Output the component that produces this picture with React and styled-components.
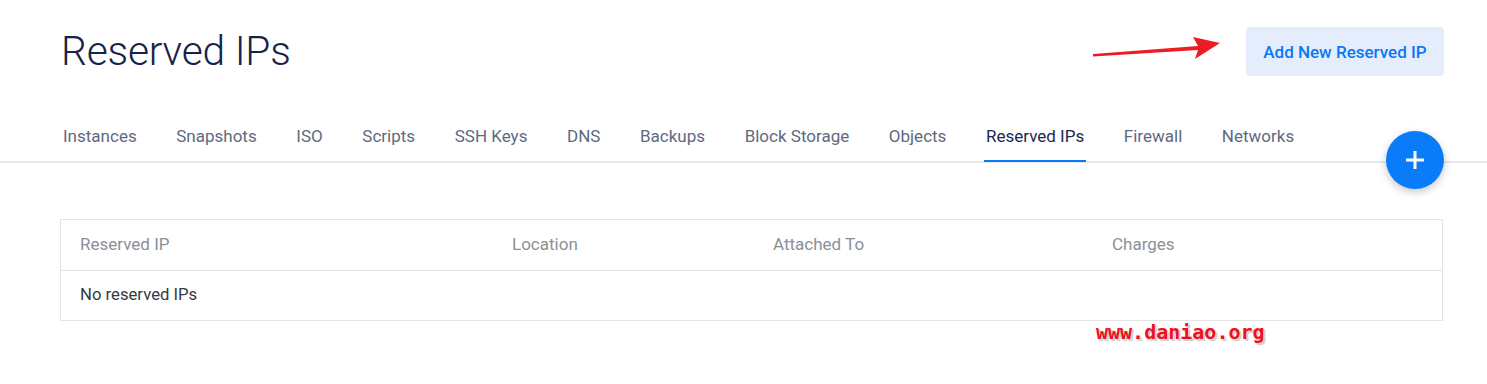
import React from "react";
import styled, { createGlobalStyle } from "styled-components";

const Global = createGlobalStyle`
  html, body { margin: 0; padding: 0; background: #fff; }
  body { font-family: Roboto, "Noto Sans", Arial, sans-serif; }
  * { box-sizing: border-box; }
`;

const Page = styled.div`
  position: relative;
  width: 1487px;
  height: 384px;
  overflow: hidden;
  background: #fff;
`;

const Header = styled.header`
  display: flex;
  align-items: center;
  justify-content: space-between;
  padding: 27px 43px 0 61px;
  height: 76px;
`;

const Title = styled.h1`
  margin: 0;
  font-family: Roboto, sans-serif;
  font-weight: 300;
  font-size: 40.7px;
  line-height: 49px;
  color: #16244a;
  letter-spacing: -0.2px;
`;

const PrimaryButton = styled.button`
  height: 49px;
  width: 198px;
  border: none;
  border-radius: 4px;
  background: #e5ecfb;
  color: #0a78f5;
  font-family: Roboto, sans-serif;
  font-weight: 500;
  font-size: 17px;
  padding: 0;
  cursor: pointer;
`;

const Tabs = styled.nav`
  display: flex;
  gap: 35.6px;
  margin-top: 48px;
  padding-left: 61px;
  border-bottom: 2px solid #e7e7ec;
`;

const Tab = styled.a`
  display: block;
  padding: 0 2px 14px;
  font-size: 17px;
  line-height: 24px;
  color: ${(p) => (p.$active ? "#1b2850" : "#5e6a80")};
  box-shadow: ${(p) => (p.$active ? "inset 0 -2px 0 #0a78f5" : "none")};
  margin-bottom: -1px;
  text-decoration: none;
  white-space: nowrap;
`;

const Fab = styled.button`
  position: absolute;
  left: 1386px;
  top: 131px;
  width: 58px;
  height: 58px;
  border-radius: 50%;
  border: none;
  background: #0a7cfa;
  box-shadow: 0 3px 8px rgba(0, 0, 0, 0.22);
  display: flex;
  align-items: center;
  justify-content: center;
  padding: 0;
`;

const Table = styled.div`
  margin: 56px 44px 0 60px;
  border: 1px solid #e4e4e4;
`;

const Row = styled.div`
  display: grid;
  grid-template-columns: 432px 261px 339px 1fr;
  height: 50px;
  align-items: center;
  padding-left: 19px;
  border-top: ${(p) => (p.$first ? "none" : "1px solid #e4e4e4")};
`;

const HeadCell = styled.div`
  font-size: 17px;
  color: #8b9098;
  margin-top: -2px;
`;

const Cell = styled.div`
  font-size: 16.7px;
  color: #333a44;
  margin-top: -2px;
  grid-column: ${(p) => p.$span || "auto"};
`;

const Watermark = styled.div`
  position: absolute;
  left: 1096px;
  top: 320px;
  font-family: "DejaVu Sans Mono", "Liberation Mono", monospace;
  font-weight: bold;
  font-size: 20px;
  color: #f01020;
  text-shadow: 1px 1px 0 #d8d8d8, 2px 2px 1px #c8c8c8;
`;

const Arrow = styled.svg`
  position: absolute;
  left: 1090px;
  top: 34px;
`;

const tabs = [
  "Instances",
  "Snapshots",
  "ISO",
  "Scripts",
  "SSH Keys",
  "DNS",
  "Backups",
  "Block Storage",
  "Objects",
  "Reserved IPs",
  "Firewall",
  "Networks",
];

export default function App() {
  return (
    <Page>
      <Global />
      <Header>
        <Title>Reserved IPs</Title>
        <PrimaryButton>Add New Reserved IP</PrimaryButton>
      </Header>
      <Arrow width="134" height="28" viewBox="0 0 134 28">
        <polygon
          points="3,20 3,22.5 108,16 105,25 130,9 103,3 108,12"
          fill="#ec1c24"
        />
      </Arrow>
      <Tabs>
        {tabs.map((t) => (
          <Tab key={t} $active={t === "Reserved IPs"}>
            {t}
          </Tab>
        ))}
      </Tabs>
      <Fab aria-label="add">
        <svg width="20" height="20" viewBox="0 0 20 20">
          <path d="M10 1v18M1 10h18" stroke="#fff" strokeWidth="3" />
        </svg>
      </Fab>
      <Table>
        <Row $first>
          <HeadCell>Reserved IP</HeadCell>
          <HeadCell>Location</HeadCell>
          <HeadCell>Attached To</HeadCell>
          <HeadCell>Charges</HeadCell>
        </Row>
        <Row>
          <Cell $span="1 / -1">No reserved IPs</Cell>
        </Row>
      </Table>
      <Watermark>www.daniao.org</Watermark>
    </Page>
  );
}
